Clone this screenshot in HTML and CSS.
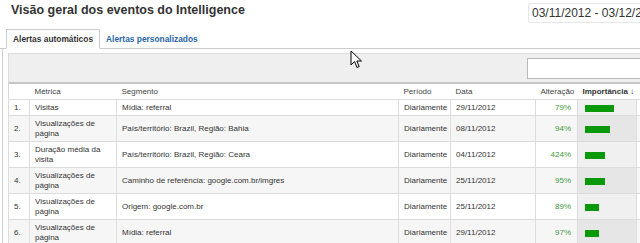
FILE: index.html
```html
<!DOCTYPE html>
<html lang="pt">
<head>
    <meta charset="UTF-8">
    <title>Visão geral dos eventos do Intelligence</title>
    <link rel="stylesheet" href="styles.css">
</head>
<body>
    <div class="top">
        <h1>Visão geral dos eventos do Intelligence</h1>
        <div class="date">03/11/2012 - 03/12/2012</div>
    </div>

    <div class="tabs">
        <span class="tab active">Alertas automáticos</span>
        <span class="tab">Alertas personalizados</span>
    </div>

    <div class="panel">
        <div class="grid">
            <div class="toolbar">
                <input type="text" class="search">
            </div>
            <table>
                <colgroup>
                    <col class="c-num"><col class="c-met"><col class="c-seg"><col class="c-per">
                    <col class="c-dat"><col class="c-alt"><col class="c-imp"><col class="c-ext">
                </colgroup>
                <thead>
                    <tr>
                        <th></th>
                        <th>Métrica</th>
                        <th>Segmento</th>
                        <th>Período</th>
                        <th>Data</th>
                        <th class="right">Alteração</th>
                        <th class="sorted">Importância ↓</th>
                        <th></th>
                    </tr>
                </thead>
                <tbody>
                    <tr>
                        <td>1.</td>
                        <td>Visitas</td>
                        <td>Mídia: referral</td>
                        <td>Diariamente</td>
                        <td>29/11/2012</td>
                        <td class="pct">79%</td>
                        <td class="imp"><span class="bar" style="width: 29px;"></span></td>
                        <td></td>
                    </tr>
                    <tr>
                        <td>2.</td>
                        <td>Visualizações de página</td>
                        <td>País/território: Brazil, Região: Bahia</td>
                        <td>Diariamente</td>
                        <td>08/11/2012</td>
                        <td class="pct">94%</td>
                        <td class="imp"><span class="bar" style="width: 25px;"></span></td>
                        <td></td>
                    </tr>
                    <tr>
                        <td>3.</td>
                        <td>Duração média da visita</td>
                        <td>País/território: Brazil, Região: Ceara</td>
                        <td>Diariamente</td>
                        <td>04/11/2012</td>
                        <td class="pct">424%</td>
                        <td class="imp"><span class="bar" style="width: 20px;"></span></td>
                        <td></td>
                    </tr>
                    <tr>
                        <td>4.</td>
                        <td>Visualizações de página</td>
                        <td>Caminho de referência: google.com.br/imgres</td>
                        <td>Diariamente</td>
                        <td>25/11/2012</td>
                        <td class="pct">95%</td>
                        <td class="imp"><span class="bar" style="width: 20px;"></span></td>
                        <td></td>
                    </tr>
                    <tr>
                        <td>5.</td>
                        <td>Visualizações de página</td>
                        <td>Origem: google.com.br</td>
                        <td>Diariamente</td>
                        <td>25/11/2012</td>
                        <td class="pct">89%</td>
                        <td class="imp"><span class="bar" style="width: 14px;"></span></td>
                        <td></td>
                    </tr>
                    <tr>
                        <td>6.</td>
                        <td>Visualizações de página</td>
                        <td>Mídia: referral</td>
                        <td>Diariamente</td>
                        <td>29/11/2012</td>
                        <td class="pct">97%</td>
                        <td class="imp"><span class="bar" style="width: 14px;"></span></td>
                        <td></td>
                    </tr>
                </tbody>
            </table>
        </div>
    </div>

    <svg class="cursor" width="13" height="19" viewBox="0 0 13 19">
        <path d="M1 1 L1 15 L4.5 11.5 L7 17.5 L9.2 16.6 L6.8 11 L11.5 11 Z" fill="#fff" stroke="#000" stroke-width="1"/>
    </svg>
</body>
</html>
```

FILE: styles.css
```css
body {
    margin: 0;
    width: 640px;
    height: 243px;
    overflow: hidden;
    position: relative;
    font-family: "Liberation Sans", Arial, sans-serif;
    color: #333;
    background: #fff;
}

.top {
    display: flex;
    height: 29px;
}

.top h1 {
    flex: 1;
    margin: 0;
    padding: 3px 0 0 11px;
    font-size: 12.5px;
    line-height: 15px;
    color: #333;
}

.date {
    width: 108px;
    height: 18px;
    margin-top: 3px;
    padding-left: 3px;
    border: 1px solid #e6e6e6;
    border-right: none;
    border-radius: 3px 0 0 3px;
    font-size: 12px;
    line-height: 18px;
    white-space: nowrap;
    overflow: hidden;
    color: #333;
}

.tabs {
    display: flex;
    padding-left: 6px;
    border-bottom: 1px solid #ccc;
    height: 19px;
}

.tab {
    padding: 5px 6px 4px;
    font-size: 8.4px;
    font-weight: bold;
    line-height: 10px;
    color: #2a64a8;
}

.tab.active {
    color: #333;
    background: #fff;
    border: 1px solid #ccc;
    border-bottom-color: #fff;
    margin-bottom: -1px;
    padding: 4px 6px 4px;
}

.panel {
    margin-left: 2px;
    border-left: 1px solid #ccc;
    padding: 4px 0 0 5px;
    height: 200px;
}

.grid {
    width: 700px;
}

.toolbar {
    display: flex;
    align-items: center;
    height: 28px;
    background: #efefef;
    border: 1px solid #dcdcdc;
    border-bottom: 2px solid #c6c6c6;
}

.search {
    margin-left: auto;
    margin-right: 38px;
    width: 140px;
    height: 19px;
    padding: 0;
    border: 1px solid #b9b9b9;
    background: #fff;
}

table {
    width: 700px;
    table-layout: fixed;
    border-collapse: collapse;
    border-left: 1px solid #d6d6d6;
    font-size: 8px;
    line-height: 10px;
}

.c-num { width: 21px; }
.c-met { width: 87px; }
.c-seg { width: 282px; }
.c-per { width: 52px; }
.c-dat { width: 85px; }
.c-alt { width: 42px; }
.c-imp { width: 59px; }
.c-ext { width: 72px; }

th {
    text-align: left;
    font-weight: normal;
    color: #444;
    padding: 3px 5px 2px 5px;
    border-bottom: 1px solid #dcdcdc;
    white-space: nowrap;
}

th.right {
    text-align: right;
    padding-right: 5px;
}

th.sorted {
    font-weight: bold;
    color: #333;
}

td {
    padding: 3px 5px 2px 5px;
    border: 1px solid #dcdcdc;
    border-top: none;
    vertical-align: middle;
    color: #333;
}

tbody tr:nth-child(even) td {
    background: #f6f6f6;
}

.pct {
    text-align: right;
    padding-right: 6px;
    color: #3a9a3a;
}

td.imp {
    background: #f0f0f0;
    padding-left: 7px;
}

tbody tr:nth-child(even) td.imp {
    background: #e6e6e6;
}

.bar {
    display: block;
    height: 7px;
    background: #0a990a;
}

.cursor {
    position: absolute;
    left: 350px;
    top: 50px;
}
```
